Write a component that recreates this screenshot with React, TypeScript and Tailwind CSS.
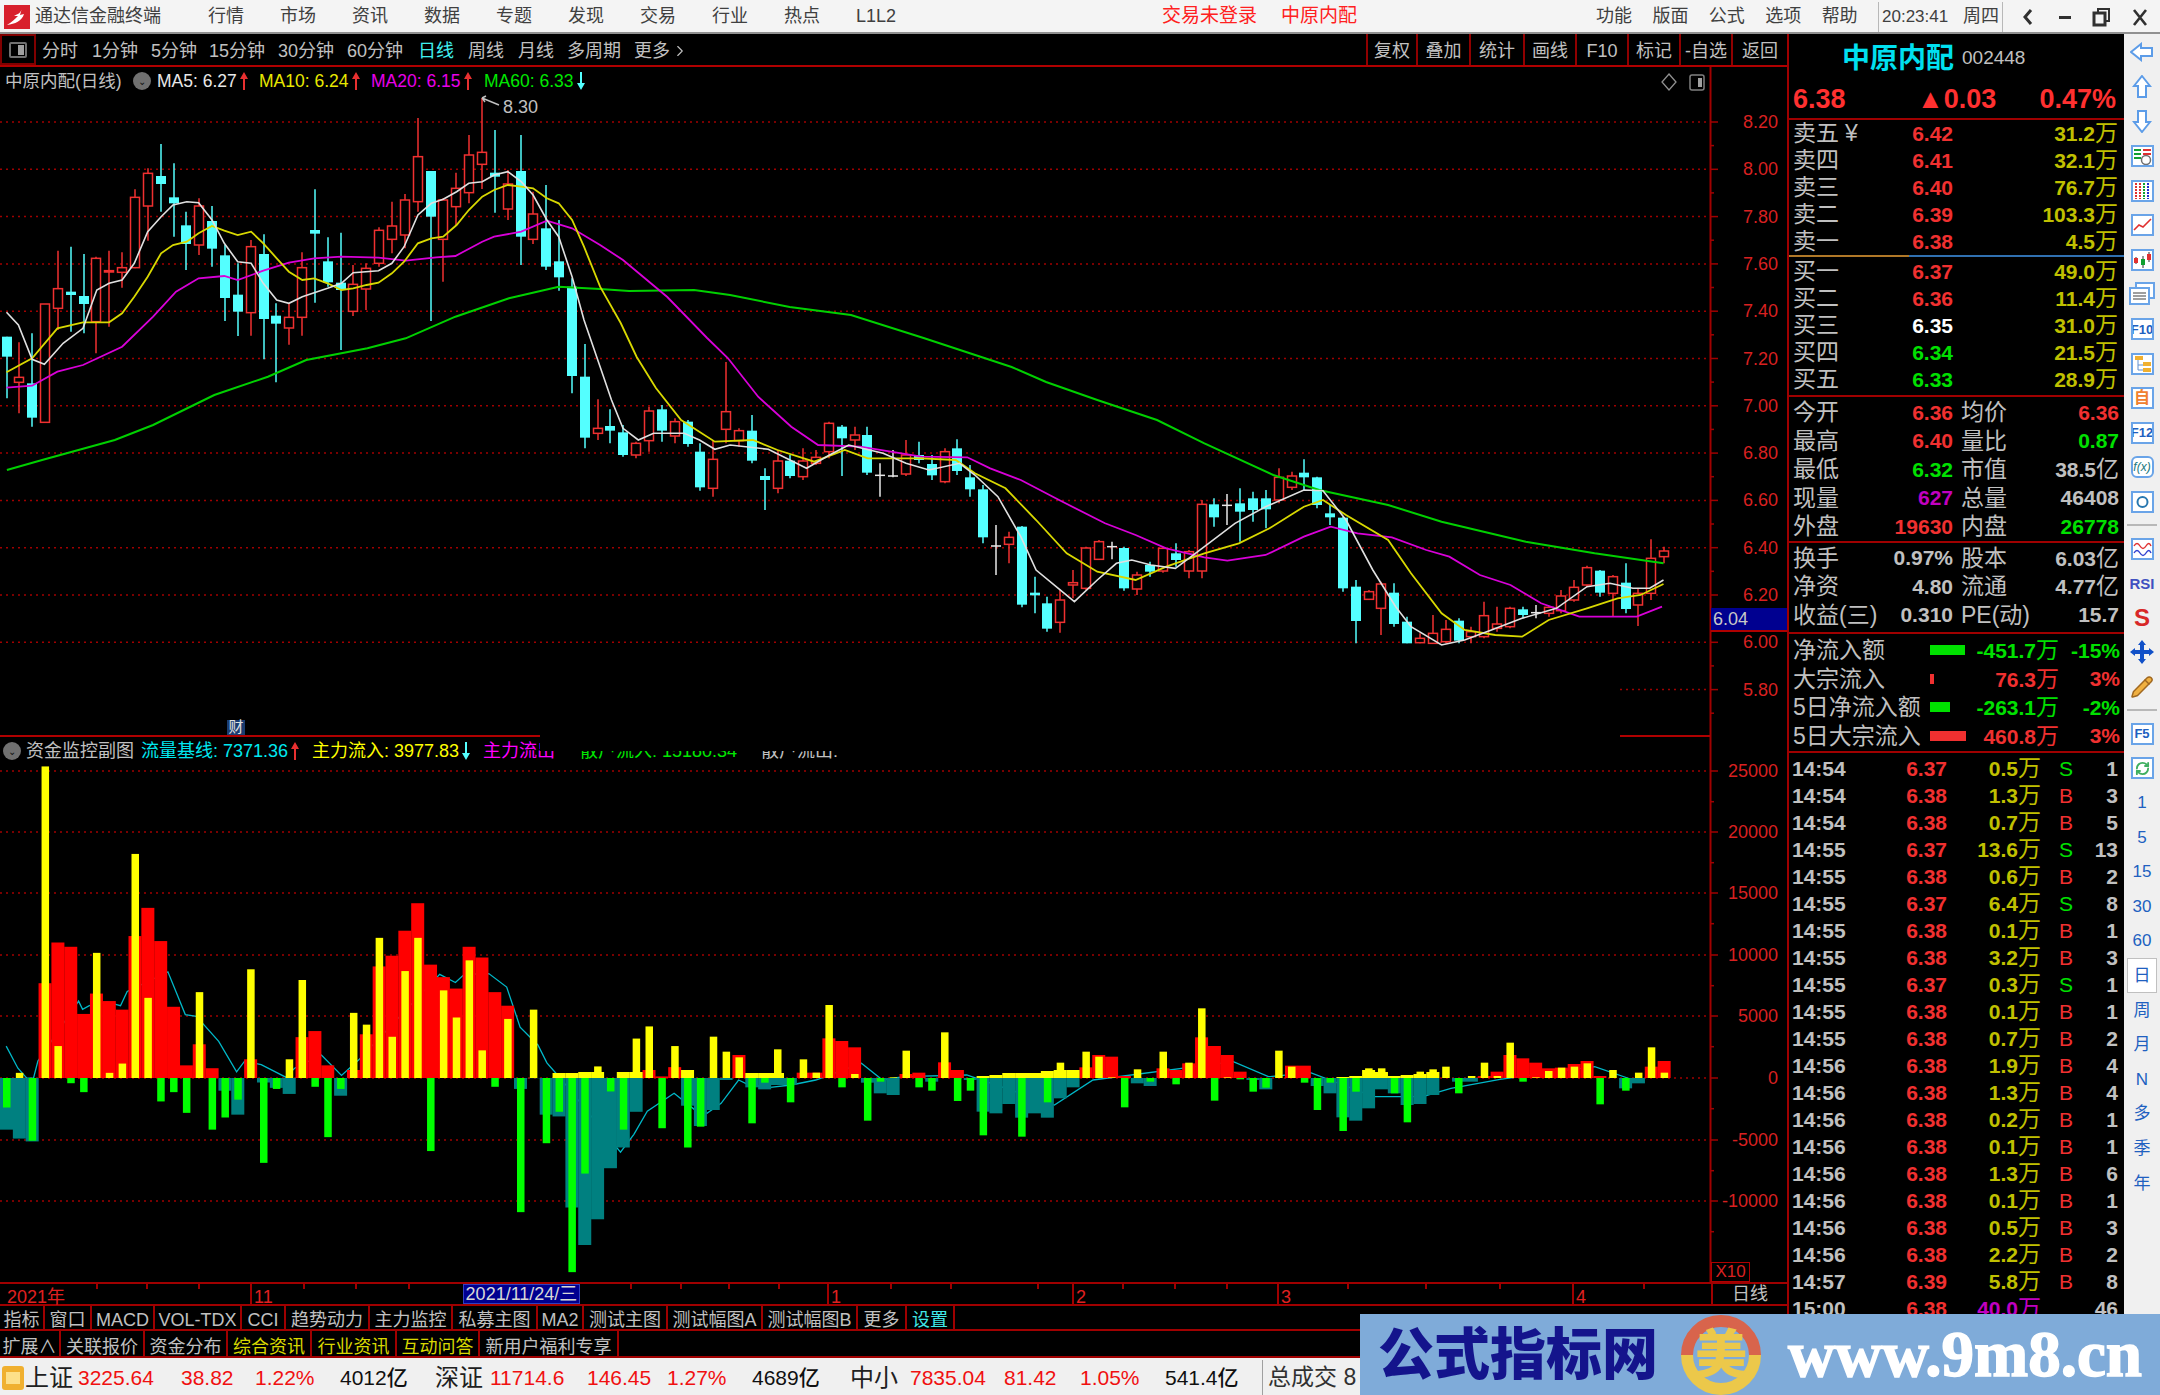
import React from "react";
import { ChevronRight, Pencil, RefreshCw } from "lucide-react";

type Kind = "r" | "c" | "w";
type Candle = [Kind, number, number, number, number];
type Pt = [number, number];

// traced off the reference: [kind, high, bodyTop, bodyBottom, low]
const headCandles: Candle[] = [
  ["c", 650, 650, 710, 835], ["r", 667, 772, 787, 880], ["c", 640, 790, 893, 920], ["r", 552, 552, 907, 907],
  ["r", 392, 506, 565, 630], ["c", 380, 515, 525, 635], ["c", 402, 528, 552, 640], ["r", 410, 415, 605, 700],
  ["r", 392, 452, 456, 620], ["r", 397, 443, 457, 503], ["r", 208, 232, 443, 445], ["r", 145, 160, 258, 362],
  ["c", 72, 168, 192, 275], ["c", 130, 232, 250, 350], ["c", 275, 316, 372, 450], ["r", 235, 258, 375, 405],
  ["c", 258, 303, 386, 440], ["c", 375, 406, 534, 603], ["c", 430, 524, 575, 648], ["r", 360, 380, 578, 647],
  ["c", 343, 402, 597, 718], ["c", 550, 587, 611, 787], ["r", 550, 592, 624, 674], ["r", 397, 443, 592, 647],
  ["c", 208, 330, 341, 548], ["c", 352, 424, 487, 500], ["c", 338, 488, 510, 690], ["r", 435, 493, 574, 588],
  ["r", 430, 445, 507, 570], ["r", 322, 331, 430, 440], ["r", 245, 318, 358, 400], ["r", 222, 240, 345, 385],
  ["r", -6, 110, 245, 275], ["c", 153, 153, 290, 603], ["r", 235, 240, 358, 485], ["r", 158, 205, 260, 315],
  ["r", 45, 105, 218, 250], ["r", -66, 97, 133, 207], ["c", 30, 158, 170, 278], ["r", 150, 192, 267, 300],
  ["c", 45, 153, 350, 435], ["r", 215, 282, 358, 372], ["c", 195, 325, 440, 450], ["c", 300, 424, 472, 512],
  ["c", 475, 500, 768, 820], ["c", 672, 770, 953, 985], ["r", 838, 925, 940, 960],
];

const tailCandles: Candle[] = [
  ["c", 28, 78, 92, 130], ["c", 75, 97, 165, 170], ["r", 125, 130, 165, 175], ["r", 20, 33, 122, 155],
  ["c", 15, 28, 92, 125], ["r", 55, 65, 108, 130], ["c", 60, 65, 132, 140], ["c", 130, 155, 262, 272],
  ["r", 120, 178, 265, 290], ["r", -114, 35, 88, 130], ["r", 85, 92, 122, 140], ["c", 45, 92, 182, 190],
  ["c", 205, 228, 240, 330], ["r", 150, 183, 265, 280], ["c", 165, 182, 228, 235], ["r", 145, 183, 230, 240],
  ["r", 150, 172, 190, 195], ["r", 65, 70, 155, 175], ["c", 75, 80, 115, 228], ["r", 80, 105, 120, 150],
  ["c", 80, 105, 218, 225], ["w", 190, 226, 230, 290], ["w", 150, 228, 232, 232], ["r", 120, 165, 222, 228],
  ["c", 125, 165, 180, 190], ["c", 165, 192, 226, 240], ["r", 145, 155, 245, 250], ["c", 118, 145, 213, 225],
  ["c", 195, 232, 268, 290], ["c", 255, 268, 412, 430], ["w", 375, 438, 442, 525], ["r", 395, 412, 433, 490],
  ["c", 378, 380, 614, 622], ["c", 530, 578, 586, 640], ["c", 590, 610, 686, 695], ["r", 570, 600, 667, 698],
  ["r", 510, 548, 555, 595], ["r", 440, 444, 565, 570], ["r", 420, 425, 478, 480], ["w", 425, 440, 444, 478],
  ["c", 440, 444, 565, 572], ["r", 515, 525, 567, 585], ["c", 485, 495, 515, 530], ["r", 440, 445, 513, 518],
  ["c", 430, 460, 480, 500], ["r", 450, 455, 513, 535], ["r", 300, 313, 513, 535], ["c", 295, 313, 352, 380],
  ["w", 282, 316, 320, 375], ["c", 265, 310, 335, 425], ["c", 275, 295, 330, 365], ["c", 270, 295, 328, 385],
  ["r", 205, 232, 300, 310], ["r", 215, 228, 262, 270], ["c", 178, 218, 232, 270], ["c", 230, 232, 315, 325],
  ["c", 315, 340, 352, 375], ["c", 350, 353, 565, 575], ["c", 540, 560, 663, 730], ["r", 570, 575, 598, 600],
  ["r", 545, 552, 625, 705], ["c", 550, 578, 672, 680], ["c", 650, 665, 730, 730], ["r", 700, 715, 728, 730],
  ["r", 645, 700, 730, 730], ["r", 660, 688, 725, 730], ["c", 655, 662, 722, 730], ["r", 680, 695, 710, 730],
  ["r", 605, 647, 710, 715], ["r", 620, 672, 685, 695], ["r", 620, 625, 680, 685], ["c", 620, 628, 645, 655],
  ["w", 615, 638, 642, 655], ["r", 618, 622, 640, 650], ["r", 570, 588, 632, 640], ["r", 540, 562, 600, 605],
  ["r", 497, 503, 555, 560], ["c", 510, 512, 578, 590], ["r", 525, 530, 580, 650], ["c", 490, 548, 627, 640],
  ["r", 565, 580, 615, 678], ["r", 418, 475, 580, 600], ["r", 440, 453, 470, 490],
].slice(0, 83) as Candle[];

const candles: Candle[] = [
  ...headCandles.map(([k, a, b, c, d]): Candle => [k, 120 + a / 3, 120 + b / 3, 120 + c / 3, 120 + d / 3]),
  ...tailCandles.map(([k, a, b, c, d]): Candle => [k, 400 + a / 3, 400 + b / 3, 400 + c / 3, 400 + d / 3]),
];

const colX = (i: number) => 6.5 + 12.85 * i;

const trace = (a: Pt[], b: Pt[]) =>
  [
    ...a.map(([x, y]) => `${(x / 2.613).toFixed(1)},${(120 + y / 3).toFixed(1)}`),
    ...b.map(([x, y]) => `${(600 + x / 1.307).toFixed(1)},${(400 + y / 3).toFixed(1)}`),
  ].join(" ");

const ma5 = trace(
  [[17, 577], [48, 615], [84, 718], [116, 733], [165, 670], [217, 625], [253, 510], [285, 490], [319, 480], [351, 430], [386, 335], [421, 290], [452, 255], [488, 245], [519, 248], [554, 300], [586, 370], [621, 425], [656, 430], [688, 490], [723, 540], [755, 550], [790, 530], [856, 505], [892, 490], [923, 458], [989, 452], [1024, 430], [1056, 380], [1092, 285], [1127, 250], [1158, 238], [1193, 215], [1225, 190], [1260, 185], [1291, 165], [1327, 155], [1362, 185], [1393, 225], [1429, 300], [1460, 350], [1495, 470], [1526, 600], [1568, 740]],
  [[15, 0], [30, 85], [50, 120], [70, 100], [110, 100], [130, 120], [150, 148], [170, 135], [220, 148], [270, 205], [300, 165], [325, 135], [370, 160], [400, 190], [430, 210], [470, 190], [490, 225], [520, 290], [550, 410], [570, 510], [620, 605], [650, 540], [675, 490], [695, 480], [720, 495], [752, 505], [790, 440], [830, 370], [870, 320], [920, 270], [945, 272], [975, 360], [1010, 510], [1040, 620], [1060, 680], [1100, 735], [1130, 720], [1165, 690], [1205, 655], [1250, 625], [1290, 560], [1320, 550], [1350, 565], [1372, 565], [1390, 540]]
);
const ma10 = trace(
  [[17, 757], [84, 715], [150, 625], [217, 607], [285, 607], [319, 580], [351, 530], [386, 470], [421, 400], [452, 375], [488, 365], [519, 340], [554, 318], [586, 332], [621, 345], [656, 335], [688, 370], [723, 415], [755, 455], [790, 480], [821, 475], [856, 490], [892, 510], [923, 505], [958, 495], [989, 488], [1024, 460], [1056, 425], [1092, 370], [1127, 355], [1158, 350], [1193, 315], [1225, 270], [1260, 230], [1291, 210], [1327, 195], [1362, 200], [1393, 205], [1429, 235], [1460, 250], [1495, 300], [1526, 380], [1568, 500]],
  [[27, -231], [48, -129], [73, -36], [106, 60], [150, 125], [200, 120], [232, 150], [280, 185], [320, 150], [350, 175], [420, 175], [465, 180], [490, 220], [530, 265], [570, 360], [610, 460], [650, 515], [700, 540], [740, 500], [790, 460], [835, 430], [875, 385], [920, 320], [945, 300], [975, 345], [1030, 420], [1060, 520], [1100, 640], [1130, 690], [1170, 705], [1205, 710], [1240, 660], [1290, 625], [1330, 595], [1360, 585], [1390, 552]]
);
const ma20 = trace(
  [[17, 803], [84, 797], [150, 755], [217, 735], [319, 680], [400, 590], [460, 515], [519, 475], [586, 468], [621, 480], [688, 452], [755, 428], [821, 415], [892, 410], [989, 413], [1060, 422], [1140, 412], [1190, 408], [1260, 365], [1291, 350], [1362, 335], [1429, 302], [1495, 325], [1568, 375]],
  [[30, -420], [88, -309], [140, -186], [167, -126], [207, -9], [250, 80], [285, 135], [340, 140], [420, 170], [480, 172], [510, 205], [550, 240], [600, 300], [660, 370], [700, 405], [740, 445], [790, 472], [820, 482], [870, 465], [920, 410], [955, 380], [990, 400], [1035, 412], [1080, 450], [1110, 470], [1150, 525], [1190, 555], [1230, 610], [1280, 650], [1320, 650], [1355, 650], [1388, 620]]
);
const ma60 = trace(
  [[18, 1050], [110, 1020], [300, 960], [400, 915], [560, 825], [700, 770], [800, 720], [960, 685], [1060, 655], [1190, 590], [1330, 535], [1460, 500], [1568, 507]],
  [[38, -327], [123, -330], [170, -315], [248, -279], [328, -255], [423, -186], [538, -99], [583, -54], [650, 0], [728, 60], [790, 130], [880, 225], [940, 270], [1030, 315], [1100, 365], [1210, 425], [1300, 460], [1390, 490]]
);

const flowLine = [
  ...([[14, 913], [40, 975], [60, 1003], [75, 1003], [85, 955], [176, 787], [185, 810], [200, 800], [240, 790], [270, 800], [285, 760], [376, 705], [415, 825], [440, 830], [490, 900], [530, 985], [548, 955], [585, 965], [640, 1000], [660, 975], [720, 938], [765, 995], [805, 950], [985, 712], [1020, 735], [1040, 712], [1095, 710], [1135, 748], [1165, 860], [1205, 910], [1225, 960], [1255, 1003], [1390, 1210], [1420, 1160], [1450, 1095], [1510, 1045], [1555, 1090]] as Pt[]).map(
    ([x, y]) => `${(x / 2.24).toFixed(1)},${(720 + y / 2.8).toFixed(1)}`
  ),
  ...([[10, 340], [30, 310], [55, 240], [70, 255], [100, 262], [130, 255], [165, 240], [230, 190], [260, 240], [290, 230], [380, 225], [505, 315], [560, 240], [760, 185], [810, 230], [870, 218], [960, 290], [1030, 290], [1070, 265], [1140, 238], [1275, 200], [1330, 240]] as Pt[]).map(
    ([x, y]) => `${(700 + x / 1.425).toFixed(1)},${(1000 + y / 3).toFixed(1)}`
  ),
].join(" ");

// sub chart, thin bars. first part read with y = 720 + v / 2.8, rest y = 1000 + v / 3
const thinA = [1085, 988, 1178, 130, 913, 1017, 1042, 652, 988, 962, 375, 778, 1068, 1042, 1100, 762, 1147, 1113, 1063, 698, 1240, 1033, 950, 728, 1027, 1168, 1033, 820, 853, 610, 887, 703, 610, 1207, 757, 833, 673, 925, 1027, 837, 1378, 811, 1185, 1097, 1546, 1270, 970, 1040, 1147, 892, 858, 1143, 913, 1197];
const thinB = [380, 110, 155, 172, 370, 248, 148, 307, 178, 218, 15, 262, 222, 362, 245, 232, 152, 262, 272, 97, 303, 272, 406, 225, 222, 410, 220, 307, 188, 210, 155, 170, 232, 322, 208, 245, 155, 253, 188, 25, 302, 232, 238, 275, 263, 152, 200, 248, 330, 248, 393, 275, 205, 205, 280, 367, 215, 208, 200, 280, 228, 188, 228, 128, 245, 232, 213, 203, 200, 190, 313, 210, 272, 218, 142, 218];
const wideA = [1147, 1172, 1180, 737, 623, 635, 823, 766, 787, 811, 605, 526, 619, 803, 967, 908, 975, 1038, 1105, 950, 1015, 1030, 1047, 888, 871, 967, 1052, 980, 880, 690, 660, 590, 513, 685, 720, 752, 635, 665, 762, 800, 1033, 1003, 1105, 1110, 1365, 1470, 1398, 1255, 1197, 1097, 980, 998, 972, 1080];
const wideB = [378, 330, 240, 165, 262, 268, 255, 255, 218, 218, 115, 123, 142, 248, 280, 285, 222, 218, 245, 187, 210, 240, 335, 340, 312, 353, 340, 353, 295, 262, 202, 165, 170, 228, 250, 258, 205, 210, 190, 112, 138, 165, 215, 240, 268, 234, 197, 197, 258, 280, 352, 362, 325, 268, 280, 315, 312, 285, 234, 245, 245, 228, 215, 165, 175, 188, 205, 203, 192, 183, 228, 234, 265, 250, 200, 183];
const caps: Record<number, number> = {
  43: 1073, 44: 1073, 45: 1072, 46: 1072, 48: 1072, 49: 1072, 53: 1070,
  58: 1073, 59: 1073, 60: 1073, 76: 1076, 77: 1075, 78: 1073, 79: 1073, 80: 1073, 81: 1071, 82: 1070, 83: 1070,
  104: 1077, 105: 1076, 106: 1070, 107: 1072, 108: 1076, 109: 1075, 110: 1074, 111: 1072,
};

const thinY = [...thinA.map((v) => 720 + v / 2.8), ...thinB.map((v) => 1000 + v / 3)];
const wideY = [...wideA.map((v) => 720 + v / 2.8), ...wideB.map((v) => 1000 + v / 3)];
const zeroY = 1078;

const priceLines = ["8.20", "8.00", "7.80", "7.60", "7.40", "7.20", "7.00", "6.80", "6.60", "6.40", "6.20", "6.00", "5.80"];
const flowLabels = [["25000", 771], ["20000", 832], ["15000", 893], ["10000", 955], ["5000", 1016], ["0", 1078], ["-5000", 1140], ["-10000", 1201]] as const;

const axisText = "fill-[#d82020] text-[18px]";

function MainChart() {
  return (
    <div className="relative h-[670px] shrink-0">
      <svg width="1787" height="670" viewBox="0 67 1787 670" className="block">
        {priceLines.map((p, i) => {
          const y = 122 + 47.3 * i;
          return (
            <g key={p}>
              <line x1={p === "5.80" ? 1620 : 0} x2="1710" y1={y} y2={y} stroke="#a00000" strokeWidth="1.5" strokeDasharray="2 4" />
              <line x1="1710" x2="1718" y1={y} y2={y} stroke="#a00000" strokeWidth="1.5" />
              <line x1="1710" x2="1714" y1={y + 23.6} y2={y + 23.6} stroke="#a00000" strokeWidth="1.5" />
              <text x="1778" y={y + 6} textAnchor="end" className={axisText}>{p}</text>
            </g>
          );
        })}
        <line x1="1710.5" x2="1710.5" y1="67" y2="737" stroke="#a00000" strokeWidth="2" />
        <line x1="1620" x2="1710" y1="736" y2="736" stroke="#b00000" strokeWidth="2" />
        <line x1="0" x2="540" y1="736" y2="736" stroke="#b00000" strokeWidth="2" />
        {candles.map(([k, hi, top, bot, lo], i) => {
          const x = Math.round(colX(i));
          if (k === "r")
            return (
              <g key={i} stroke="#f03030" strokeWidth="1.5">
                <line x1={x} x2={x} y1={hi} y2={top} />
                <line x1={x} x2={x} y1={bot} y2={lo} />
                <rect x={x - 4.5} y={top} width="9" height={Math.max(bot - top, 1)} fill="#000" />
              </g>
            );
          if (k === "w")
            return (
              <g key={i} stroke="#e8e8e8" strokeWidth="1.5">
                <line x1={x} x2={x} y1={hi} y2={lo} />
                <line x1={x - 5} x2={x + 5} y1={top} y2={top} />
              </g>
            );
          return (
            <g key={i}>
              <line x1={x} x2={x} y1={hi} y2={lo} stroke="#54ffff" strokeWidth="1.5" />
              <rect x={x - 5} y={top} width="10" height={bot - top} fill="#54ffff" />
            </g>
          );
        })}
        <polyline points={ma60} fill="none" stroke="#00d000" strokeWidth="2" />
        <polyline points={ma20} fill="none" stroke="#d800d8" strokeWidth="1.8" />
        <polyline points={ma10} fill="none" stroke="#d8d800" strokeWidth="1.8" />
        <polyline points={ma5} fill="none" stroke="#e0e0e0" strokeWidth="1.6" />
        <path d="M482 98 l17 7 M482 98 l4 -2 M482 98 l3 4" stroke="#c0c0c0" strokeWidth="1.4" fill="none" />
        <text x="503" y="113" className="fill-[#c0c0c0] text-[18px]">8.30</text>
        <path d="M1669 74 l7 8 l-7 8 l-7 -8 z" fill="none" stroke="#909090" strokeWidth="1.3" />
        <rect x="1690" y="75" width="14" height="15" rx="2" fill="none" stroke="#808080" strokeWidth="1.5" />
        <rect x="1698" y="78" width="4" height="9" fill="#a0a0a0" />
      </svg>

      {/* price flag on the axis */}
      <div className="absolute left-[1711px] top-[541px] flex h-[24px] w-[76px] items-center border-b-2 border-[#b00000] bg-[#000090] pl-[2px] text-[18px] text-[#c8c8c8]">
        6.04
      </div>

      <div className="absolute left-0 top-[4px] flex h-[20px] items-center text-[17.5px]">
        <span className="ml-[5px] w-[128px] text-[#c0c0c0]">中原内配(日线)</span>
        <span className="mr-[6px] flex h-[18px] w-[18px] items-center justify-center rounded-full bg-[#707070] text-[10px] text-[#111]">⌄</span>
        <Legend className="w-[102px] text-[#e8e8e8]" text="MA5: 6.27" up />
        <Legend className="w-[112px] text-[#e8e800]" text="MA10: 6.24" up />
        <Legend className="w-[113px] text-[#e800e8]" text="MA20: 6.15" up />
        <Legend className="w-[110px] text-[#00e800]" text="MA60: 6.33" />
      </div>

      <div className="absolute left-[227px] top-[653px] flex h-[15px] w-[18px] items-center justify-center bg-[#1a3c70] text-[15px] text-[#e0e0e0]">
        财
      </div>
    </div>
  );
}

function Legend({ className, text, up }: { className: string; text: string; up?: boolean }) {
  return (
    <span className={`flex items-center gap-[3px] ${className}`}>
      <span>{text}</span>
      <Arrow up={up} />
    </span>
  );
}

function Arrow({ up }: { up?: boolean }) {
  return up ? (
    <svg width="8" height="18" viewBox="0 0 8 18">
      <path d="M4 0 L8 7 H5 V18 H3 V7 H0 Z" fill="#e83030" />
    </svg>
  ) : (
    <svg width="8" height="18" viewBox="0 0 8 18">
      <path d="M4 18 L8 11 H5 V0 H3 V11 H0 Z" fill="#54ffff" />
    </svg>
  );
}

function SubChart() {
  return (
    <div className="relative h-[545px] shrink-0">
      <svg width="1787" height="545" viewBox="0 737 1787 545" className="block">
        {flowLabels.map(([label, y]) => (
          <g key={label}>
            <line x1="0" x2="1710" y1={y} y2={y} stroke="#a00000" strokeWidth="1.5" strokeDasharray="2 4" />
            <line x1="1710" x2="1718" y1={y} y2={y} stroke="#a00000" strokeWidth="1.5" />
            <line x1="1710" x2="1714" y1={y + 30.7} y2={y + 30.7} stroke="#a00000" strokeWidth="1.5" />
            <text x="1778" y={y + 6} textAnchor="end" className={axisText}>{label}</text>
          </g>
        ))}
        <line x1="1710.5" x2="1710.5" y1="737" y2="1282" stroke="#a00000" strokeWidth="2" />
        <polyline points={flowLine} fill="none" stroke="#00b8c8" strokeWidth="1.3" />
        {wideY.map((y, i) => (
          <rect
            key={i}
            x={colX(i) - 6.5}
            y={Math.min(y, zeroY)}
            width="13"
            height={Math.abs(y - zeroY)}
            fill={y < zeroY ? "#ff0000" : "#008080"}
          />
        ))}
        {Object.entries(caps).map(([i, y]) => (
          <rect key={i} x={colX(Number(i)) - 6.5} y={y} width="13" height={zeroY - y} fill="#ffff00" />
        ))}
        {thinY.map((y, i) => (
          <rect
            key={i}
            x={colX(i) - 3.5}
            y={Math.min(y, zeroY)}
            width="7.5"
            height={Math.abs(y - zeroY)}
            fill={y < zeroY ? "#ffff00" : "#00ff00"}
          />
        ))}
      </svg>

      <div className="absolute left-0 top-[4px] flex h-[20px] items-center whitespace-nowrap text-[18px]">
        <span className="ml-[3px] mr-[5px] flex h-[18px] w-[18px] items-center justify-center rounded-full bg-[#707070] text-[10px] text-[#111]">⌄</span>
        <span className="w-[115px] text-[#c0c0c0]">资金监控副图</span>
        <span className="flex w-[171px] items-center gap-[3px] text-[#00e8f0]">流量基线: 7371.36<Arrow up /></span>
        <span className="flex w-[171px] items-center gap-[3px] text-[#ffff00]">主力流入: 3977.83<Arrow /></span>
        <span className="w-[97px] text-[#ff00ff]">主力流出</span>
        <span className="w-[181px] text-[#00e800]">散户流入: 15180.34</span>
        <span className="text-[#c0c0c0]">散户流出:</span>
      </div>
      {/* the pasted black block that hides part of the legend */}
      <div className="absolute left-[540px] top-0 h-[14px] w-[1080px] bg-black" />

      <div className="absolute left-[1711px] top-[525px] flex h-[20px] w-[39px] items-center justify-center border border-[#b00000] text-[17px] text-[#d82020]">
        X10
      </div>
    </div>
  );
}

const minorTicks = [96, 146, 198, 303, 355, 408, 630, 680, 728, 778, 890, 950, 1037, 1122, 1174, 1226, 1347, 1425, 1499, 1643];
const majorDates = [
  { label: "11", left: "left-[250px]" },
  { label: "1", left: "left-[827px]" },
  { label: "2", left: "left-[1072px]" },
  { label: "3", left: "left-[1277px]" },
  { label: "4", left: "left-[1572px]" },
];

function DateRow() {
  return (
    <div className="relative h-[24px] shrink-0 border-y-2 border-[#a00000] text-[18px] text-[#e02020]">
      <span className="absolute left-[7px] top-0">2021年</span>
      {minorTicks.map((x) => (
        <svg key={x} width="2" height="5" className="absolute top-0" style={{ left: x }}>
          <rect width="2" height="5" fill="#a00000" />
        </svg>
      ))}
      {majorDates.map((d) => (
        <span key={d.label} className={`absolute top-0 h-[20px] border-l-2 border-[#a00000] pl-[2px] ${d.left}`}>{d.label}</span>
      ))}
      <span className="absolute left-[463px] top-0 flex h-[20px] w-[117px] items-center justify-center border border-[#3040c0] bg-[#000090] text-[#d8d8d8]">
        2021/11/24/三
      </span>
      <span className="absolute left-[1711px] top-0 flex h-[20px] w-[76px] items-center justify-center border-l-2 border-[#a00000] text-[#c0c0c0]">
        日线
      </span>
    </div>
  );
}

const tabsA = [
  { label: "指标", w: "w-[45px]" }, { label: "窗口", w: "w-[47px]" }, { label: "MACD", w: "w-[63px]" },
  { label: "VOL-TDX", w: "w-[87px]" }, { label: "CCI", w: "w-[44px]" }, { label: "趋势动力", w: "w-[84px]" },
  { label: "主力监控", w: "w-[83px]" }, { label: "私募主图", w: "w-[85px]" }, { label: "MA2", w: "w-[46px]" },
  { label: "测试主图", w: "w-[84px]" }, { label: "测试幅图A", w: "w-[95px]" }, { label: "测试幅图B", w: "w-[95px]" },
  { label: "更多", w: "w-[49px]" }, { label: "设置", w: "w-[48px]", color: "text-[#40e8e8]" },
];
const tabsB = [
  { label: "扩展∧", w: "w-[61px]" }, { label: "关联报价", w: "w-[84px]" }, { label: "资金分布", w: "w-[83px]" },
  { label: "综合资讯", w: "w-[84px]", color: "text-[#d8d800]" }, { label: "行业资讯", w: "w-[85px]", color: "text-[#d8d800]" },
  { label: "互动问答", w: "w-[83px]", color: "text-[#d8d800]" }, { label: "新用户福利专享", w: "w-[139px]" },
];

function TabRow({ tabs, className, cell }: { tabs: { label: string; w: string; color?: string }[]; className: string; cell: string }) {
  return (
    <div className={`flex shrink-0 border-b-2 border-[#a00000] text-[18px] leading-none ${className}`}>
      {tabs.map((t) => (
        <span key={t.label} className={`flex items-center justify-center whitespace-nowrap border-r-2 border-[#a00000] ${cell} ${t.w} ${t.color ?? "text-[#c0c0c0]"}`}>
          {t.label}
        </span>
      ))}
    </div>
  );
}

const periods = [
  { label: "分时", w: "w-[50px]" }, { label: "1分钟", w: "w-[59px]" }, { label: "5分钟", w: "w-[58px]" },
  { label: "15分钟", w: "w-[69px]" }, { label: "30分钟", w: "w-[69px]" }, { label: "60分钟", w: "w-[71px]" },
  { label: "日线", w: "w-[50px]", color: "text-[#40f0f0]" }, { label: "周线", w: "w-[50px]" }, { label: "月线", w: "w-[49px]" },
  { label: "多周期", w: "w-[67px]" },
];
const tools = [
  { label: "复权", w: "w-[50px]" }, { label: "叠加", w: "w-[53px]" }, { label: "统计", w: "w-[54px]" },
  { label: "画线", w: "w-[52px]" }, { label: "F10", w: "w-[52px]" }, { label: "标记", w: "w-[52px]" },
  { label: "-自选", w: "w-[52px]" }, { label: "返回", w: "w-[56px]" },
];

function Toolbar() {
  return (
    <div className="flex h-[33px] shrink-0 items-stretch border-b-2 border-[#b00000] text-[18px] text-[#c0c0c0]">
      <div className="flex w-[36px] items-center justify-center border-2 border-[#800000]">
        <span className="flex h-[16px] w-[18px] justify-end rounded-[2px] border-2 border-[#707070] p-[1px]">
          <span className="w-[6px] bg-[#a0a0a0]" />
        </span>
      </div>
      <div className="ml-[6px] flex w-[1324px] pt-[3px]">
        {periods.map((p) => (
          <span key={p.label} className={`flex items-center whitespace-nowrap ${p.w} ${p.color ?? ""}`}>{p.label}</span>
        ))}
        <span className="flex items-center gap-[1px] whitespace-nowrap">
          更多<ChevronRight size={18} strokeWidth={1.5} />
        </span>
      </div>
      {tools.map((t) => (
        <span key={t.label} className={`flex items-center justify-center border-l-2 border-[#900000] pt-[3px] ${t.w}`}>{t.label}</span>
      ))}
    </div>
  );
}

const menu = ["行情", "市场", "资讯", "数据", "专题", "发现", "交易", "行业", "热点", "L1L2"];
const rightMenu = ["功能", "版面", "公式", "选项", "帮助"];

function TitleBar() {
  return (
    <div className="flex h-[34px] shrink-0 items-center border-b-2 border-[#909090] bg-[#f4f4f4] pt-[1px] text-[18px] text-[#404040]">
      <svg width="26" height="24" viewBox="0 0 26 24" className="ml-[4px]">
        <rect width="26" height="24" fill="#d8202c" />
        <path d="M18 3 C 17 8 14 9 10 11 L 14 11 C 11 14 8 17 3 20 C 11 19 18 16 20 9 L 16 10 Z" fill="#fff" />
      </svg>
      <span className="ml-[5px] w-[173px]">通达信金融终端</span>
      <div className="flex w-[954px]">
        {menu.map((m) => (
          <span key={m} className="w-[72px]">{m}</span>
        ))}
      </div>
      <span className="w-[119px] text-[19px] text-[#ff2020]">交易未登录</span>
      <span className="w-[315px] text-[19px] text-[#ff2020]">中原内配</span>
      <div className="flex w-[282px]">
        {rightMenu.map((m) => (
          <span key={m} className="w-[57px]">{m}</span>
        ))}
      </div>
      <div className="flex h-[30px] w-[125px] items-center border-x border-[#b8b8b8] pl-[3px] text-[17px]">
        <span className="w-[81px]">20:23:41</span>
        <span className="text-[18px]">周四</span>
      </div>
      <svg width="157" height="24" viewBox="0 0 157 24">
        <path d="M28 5 L22 12 L28 19" fill="none" stroke="#303030" strokeWidth="3" />
        <rect x="56" y="11" width="12" height="3" fill="#303030" />
        <rect x="95" y="4" width="11" height="12" fill="none" stroke="#303030" strokeWidth="2" />
        <rect x="91" y="8" width="11" height="12" fill="#f4f4f4" stroke="#303030" strokeWidth="3" />
        <path d="M131 5 L143 20 M143 5 L131 20" stroke="#303030" strokeWidth="2.6" />
      </svg>
    </div>
  );
}

const sells = [
  ["卖五", "6.42", "31.2", "text-[#f03030]"], ["卖四", "6.41", "32.1", "text-[#f03030]"], ["卖三", "6.40", "76.7", "text-[#f03030]"],
  ["卖二", "6.39", "103.3", "text-[#f03030]"], ["卖一", "6.38", "4.5", "text-[#f03030]"],
];
const buys = [
  ["买一", "6.37", "49.0", "text-[#f03030]"], ["买二", "6.36", "11.4", "text-[#f03030]"], ["买三", "6.35", "31.0", "text-white"],
  ["买四", "6.34", "21.5", "text-[#00e000]"], ["买五", "6.33", "28.9", "text-[#00e000]"],
];

function QuoteRow({ row, yen }: { row: string[]; yen?: boolean }) {
  const [label, price, vol, color] = row;
  return (
    <div className="flex h-[27px] shrink-0 items-center pl-[4px] pr-[6px]">
      <span className="relative w-[90px] text-[23px] text-[#c0c0c0]">
        {label}
        {yen && <span className="absolute left-[52px] top-0">¥</span>}
      </span>
      <span className={`w-[70px] text-right text-[21px] font-bold ${color}`}>{price}</span>
      <span className="flex-1 text-right text-[21px] font-bold text-[#c0c000]">
        {vol}<span className="text-[23px] font-normal">万</span>
      </span>
    </div>
  );
}

const R = "text-[#f03030]";
const G = "text-[#00e000]";
const N = "text-[#c0c0c0]";

function StatRow({ a, av, ac = N, b, bv, bc = N, unit }: { a: string; av: string; ac?: string; b: string; bv: string; bc?: string; unit?: string }) {
  return (
    <div className="flex h-[28.5px] items-center pl-[4px] pr-[5px]">
      <span className="w-[90px] whitespace-nowrap text-[23px] text-[#c0c0c0]">{a}</span>
      <span className={`w-[70px] text-right text-[21px] font-bold ${ac}`}>{av}</span>
      <span className="ml-[8px] w-[64px] whitespace-nowrap text-[23px] text-[#c0c0c0]">{b}</span>
      <span className={`flex-1 text-right text-[21px] font-bold ${bc}`}>
        {bv}{unit && <span className="text-[23px] font-normal">{unit}</span>}
      </span>
    </div>
  );
}

function FlowRow({ label, bar, value, pct, color }: { label: string; bar: string; value: string; pct: string; color: string }) {
  return (
    <div className="flex h-[28.5px] items-center pl-[4px] pr-[4px]">
      <span className="w-[137px] whitespace-nowrap text-[23px] text-[#c0c0c0]">{label}</span>
      <span className="w-[36px]"><span className={`block h-[10px] ${bar}`} /></span>
      <span className={`w-[93px] text-right text-[21px] font-bold ${color}`}>
        {value}<span className="text-[23px] font-normal">万</span>
      </span>
      <span className={`flex-1 text-right text-[21px] font-bold ${color}`}>{pct}</span>
    </div>
  );
}

const trades: [string, string, string, string, string][] = [
  ["14:54", "6.37", "0.5", "S", "1"], ["14:54", "6.38", "1.3", "B", "3"], ["14:54", "6.38", "0.7", "B", "5"],
  ["14:55", "6.37", "13.6", "S", "13"], ["14:55", "6.38", "0.6", "B", "2"], ["14:55", "6.37", "6.4", "S", "8"],
  ["14:55", "6.38", "0.1", "B", "1"], ["14:55", "6.38", "3.2", "B", "3"], ["14:55", "6.37", "0.3", "S", "1"],
  ["14:55", "6.38", "0.1", "B", "1"], ["14:55", "6.38", "0.7", "B", "2"], ["14:56", "6.38", "1.9", "B", "4"],
  ["14:56", "6.38", "1.3", "B", "4"], ["14:56", "6.38", "0.2", "B", "1"], ["14:56", "6.38", "0.1", "B", "1"],
  ["14:56", "6.38", "1.3", "B", "6"], ["14:56", "6.38", "0.1", "B", "1"], ["14:56", "6.38", "0.5", "B", "3"],
  ["14:56", "6.38", "2.2", "B", "2"], ["14:57", "6.39", "5.8", "B", "8"], ["15:00", "6.38", "40.0", "", "46"],
];

function QuotePanel() {
  return (
    <div className="flex w-[337px] shrink-0 flex-col overflow-hidden border-l-2 border-[#a00000]">
      <div className="h-[86px] shrink-0 border-b-2 border-[#a00000]">
        <div className="flex h-[48px] items-center pl-[53px] pt-[1px]">
          <span className="w-[120px] text-[28px] font-bold text-[#00e0f0]">中原内配</span>
          <span className="text-[19px] text-[#c0c0c0]">002448</span>
        </div>
        <div className="flex h-[35px] items-center pl-[4px] pr-[8px] text-[27px] font-bold text-[#ff3030]">
          <span className="w-[124px]">6.38</span>
          <span className="w-[120px]">▲0.03</span>
          <span className="flex-1 text-right">0.47%</span>
        </div>
      </div>
      {sells.map((r, i) => (
        <QuoteRow key={r[0]} row={r} yen={i === 0} />
      ))}
      <div className="mb-[1px] flex h-[2px] shrink-0">
        <span className="w-[120px] bg-[#b07828]" />
        <span className="flex-1 bg-[#3070b0]" />
      </div>
      {buys.map((r) => (
        <QuoteRow key={r[0]} row={r} />
      ))}
      <div className="mt-[2px] shrink-0 border-y-2 border-[#a00000] pt-[1px]">
        <StatRow a="今开" av="6.36" ac={R} b="均价" bv="6.36" bc={R} />
        <StatRow a="最高" av="6.40" ac={R} b="量比" bv="0.87" bc={G} />
        <StatRow a="最低" av="6.32" ac={G} b="市值" bv="38.5" unit="亿" />
        <StatRow a="现量" av="627" ac="text-[#c000c0]" b="总量" bv="46408" />
        <StatRow a="外盘" av="19630" ac={R} b="内盘" bv="26778" bc={G} />
      </div>
      <div className="shrink-0 border-b-2 border-[#a00000] pb-[3px] pt-[1px]">
        <StatRow a="换手" av="0.97%" b="股本" bv="6.03" unit="亿" />
        <StatRow a="净资" av="4.80" b="流通" bv="4.77" unit="亿" />
        <StatRow a="收益(三)" av="0.310" b="PE(动)" bv="15.7" />
      </div>
      <div className="shrink-0 border-b-2 border-[#a00000] pb-[1px] pt-[2px]">
        <FlowRow label="净流入额" bar="w-[35px] bg-[#00e000]" value="-451.7" pct="-15%" color={G} />
        <FlowRow label="大宗流入" bar="w-[4px] bg-[#f03030]" value="76.3" pct="3%" color={R} />
        <FlowRow label="5日净流入额" bar="w-[20px] bg-[#00e000]" value="-263.1" pct="-2%" color={G} />
        <FlowRow label="5日大宗流入" bar="w-[36px] bg-[#f03030]" value="460.8" pct="3%" color={R} />
      </div>
      <div className="shrink-0 pt-[2px]">
        {trades.map(([t, p, v, f, n], i) => (
          <div key={i} className="flex h-[27px] items-center pl-[3px] pr-[6px] text-[21px] font-bold">
            <span className={`w-[65px] ${N}`}>{t}</span>
            <span className={`w-[90px] text-right ${R}`}>{p}</span>
            <span className={`w-[94px] text-right ${f ? "text-[#c0c000]" : "text-[#c000c0]"}`}>
              {v}<span className="text-[23px] font-normal">万</span>
            </span>
            <span className={`ml-[18px] w-[14px] font-normal ${f === "S" ? G : R}`}>{f}</span>
            <span className={`flex-1 text-right ${N}`}>{n}</span>
          </div>
        ))}
      </div>
    </div>
  );
}

function IconBox({ children, rounded }: { children: React.ReactNode; rounded?: boolean }) {
  return (
    <span className={`flex h-[22px] w-[23px] items-center justify-center overflow-hidden border-2 border-[#6aa4e8] bg-white ${rounded ? "rounded-[6px]" : ""}`}>
      {children}
    </span>
  );
}

const boxText = "text-[13px] font-bold leading-none text-[#2060c0]";
const sideIcons: React.ReactNode[] = [
  <svg key="l" width="24" height="20" viewBox="0 0 24 20"><path d="M1 10 L11 2 V6 H22 V14 H11 V18 Z" fill="#fff" stroke="#5c9ce8" strokeWidth="2" /></svg>,
  <svg key="u" width="20" height="24" viewBox="0 0 20 24"><path d="M10 1 L18 11 H14 V22 H6 V11 H2 Z" fill="#fff" stroke="#5c9ce8" strokeWidth="2" /></svg>,
  <svg key="d" width="20" height="24" viewBox="0 0 20 24"><path d="M10 23 L18 13 H14 V2 H6 V13 H2 Z" fill="#fff" stroke="#5c9ce8" strokeWidth="2" /></svg>,
  <IconBox key="a"><svg width="19" height="18" viewBox="0 0 19 18"><path d="M1 3 H8 M1 7 H8 M1 11 H8" stroke="#10a030" strokeWidth="2" /><path d="M10 3 H18 M10 7 H18" stroke="#e03030" strokeWidth="2" /><circle cx="13" cy="13" r="4.5" fill="#fff" stroke="#707070" strokeWidth="1.5" /></svg></IconBox>,
  <IconBox key="b"><svg width="19" height="18" viewBox="0 0 19 18"><g strokeWidth="2" strokeDasharray="2 1"><path d="M3 1 V17" stroke="#e03030" /><path d="M7 1 V17" stroke="#e03030" /><path d="M11 1 V17" stroke="#10a030" /><path d="M15 1 V17" stroke="#2030d0" /></g></svg></IconBox>,
  <IconBox key="c"><svg width="19" height="18" viewBox="0 0 19 18"><path d="M1 14 L6 9 L10 11 L18 3" fill="none" stroke="#e03030" strokeWidth="1.6" /></svg></IconBox>,
  <IconBox key="e"><svg width="19" height="18" viewBox="0 0 19 18"><path d="M3 6 V13 M10 5 V17 M16 1 V11" stroke="#303030" strokeWidth="1" /><rect x="1" y="7" width="4" height="5" fill="#e03030" /><rect x="8" y="8" width="4" height="6" fill="#10a030" /><rect x="14" y="3" width="4" height="6" fill="#e03030" /></svg></IconBox>,
  <svg key="f" width="26" height="24" viewBox="0 0 26 24"><rect x="7" y="1" width="18" height="15" fill="#fff" stroke="#6aa4e8" strokeWidth="2" /><rect x="1" y="6" width="19" height="16" fill="#fff" stroke="#6aa4e8" strokeWidth="2" /><path d="M4 11 H17 M4 14 H17 M4 17 H17" stroke="#808080" strokeWidth="1.6" /></svg>,
  <IconBox key="g"><span className={boxText}>F10</span></IconBox>,
  <IconBox key="h"><svg width="19" height="18" viewBox="0 0 19 18"><path d="M5 5 V15 H10 M5 10 H10" fill="none" stroke="#6090d0" /><rect x="2" y="1" width="8" height="4" fill="#f0b030" /><rect x="10" y="7" width="8" height="4" fill="#f0b030" /><rect x="10" y="13" width="8" height="4" fill="#f0b030" /></svg></IconBox>,
  <IconBox key="i"><span className="text-[16px] font-bold leading-none text-[#f08030]">自</span></IconBox>,
  <IconBox key="j"><span className={boxText}>F12</span></IconBox>,
  <IconBox key="k" rounded><span className="text-[12px] italic leading-none text-[#207880]">f(x)</span></IconBox>,
  <IconBox key="m"><svg width="19" height="18" viewBox="0 0 19 18"><circle cx="9.5" cy="9" r="5" fill="none" stroke="#2878b0" strokeWidth="2" /></svg></IconBox>,
  null,
  <IconBox key="n"><svg width="19" height="18" viewBox="0 0 19 18"><path d="M1 6 Q4 1 7 6 T13 6 T18 6" fill="none" stroke="#e03030" strokeWidth="1.4" /><path d="M1 13 Q4 8 7 13 T13 13 T18 13" fill="none" stroke="#3040d0" strokeWidth="1.4" /></svg></IconBox>,
  <span key="o" className="text-[15px] font-bold leading-none text-[#4050c0]">RSI</span>,
  <span key="p" className="text-[24px] font-bold leading-none text-[#d82828]">S</span>,
  <svg key="q" width="24" height="24" viewBox="0 0 24 24"><path d="M12 0 L16 5 H14 V10 H19 V8 L24 12 L19 16 V14 H14 V19 H16 L12 24 L8 19 H10 V14 H5 V16 L0 12 L5 8 V10 H10 V5 H8 Z" fill="#1050c8" /></svg>,
  <Pencil key="r" size={24} color="#a06820" fill="#f0b040" strokeWidth={1.5} />,
  null,
  <IconBox key="s"><span className={boxText}>F5</span></IconBox>,
  <IconBox key="t"><RefreshCw size={15} color="#40b060" strokeWidth={3} /></IconBox>,
];

const sideLabels = ["1", "5", "15", "30", "60", "日", "周", "月", "N", "多", "季", "年"];

function SideBar() {
  return (
    <div className="flex w-[36px] shrink-0 flex-col items-center bg-[#f0f0f0] pt-[1px]">
      {sideIcons.map((icon, i) =>
        icon ? (
          <div key={i} className="flex h-[34.6px] shrink-0 items-center justify-center">{icon}</div>
        ) : (
          <div key={i} className="flex h-[12px] w-[30px] shrink-0 items-center"><span className="h-[2px] w-full bg-[#b8b8b8]" /></div>
        )
      )}
      {sideLabels.map((s) => (
        <div
          key={s}
          className={`flex h-[34.6px] w-[30px] shrink-0 items-center justify-center text-[17px] text-[#2060c0] ${s === "日" ? "border border-[#c0c0c0] bg-white" : ""}`}
        >
          {s}
        </div>
      ))}
    </div>
  );
}

const statusItems = [
  { t: "上证", w: "w-[53px]", c: "text-[#202020] text-[24px] font-normal" },
  { t: "3225.64", w: "w-[103px]", c: "text-[#f01010]" },
  { t: "38.82", w: "w-[74px]", c: "text-[#f01010]" },
  { t: "1.22%", w: "w-[85px]", c: "text-[#f01010]" },
  { t: "4012亿", w: "w-[95px]", c: "text-[#101010]" },
  { t: "深证", w: "w-[55px]", c: "text-[#202020] text-[24px] font-normal" },
  { t: "11714.6", w: "w-[97px]", c: "text-[#f01010]" },
  { t: "146.45", w: "w-[80px]", c: "text-[#f01010]" },
  { t: "1.27%", w: "w-[85px]", c: "text-[#f01010]" },
  { t: "4689亿", w: "w-[98px]", c: "text-[#101010]" },
  { t: "中小", w: "w-[60px]", c: "text-[#202020] text-[24px] font-normal" },
  { t: "7835.04", w: "w-[94px]", c: "text-[#f01010]" },
  { t: "81.42", w: "w-[76px]", c: "text-[#f01010]" },
  { t: "1.05%", w: "w-[85px]", c: "text-[#f01010]" },
  { t: "541.4亿", w: "w-[97px]", c: "text-[#101010]" },
];

function StatusBar() {
  return (
    <div className="flex h-[37px] shrink-0 items-center whitespace-nowrap bg-[#f0f0f0] pt-[2px] text-[21px] font-medium">
      <span className="ml-[2px] mr-[1px] flex h-[24px] w-[22px] items-center justify-center rounded-[3px] bg-[#f0b030]">
        <span className="h-[12px] w-[14px] bg-[#fde08a]" />
      </span>
      {statusItems.map((s) => (
        <span key={s.t} className={`${s.w} ${s.c}`}>{s.t}</span>
      ))}
      <span className="border-l border-[#a0a0a0] pl-[5px] text-[23px] font-normal text-[#303030]">总成交 8</span>
    </div>
  );
}

function Banner() {
  return (
    <div className="absolute bottom-0 right-0 flex h-[81px] w-[800px] items-center bg-[#7fabd9] pl-[18px]">
      <span className="w-[280px] whitespace-nowrap text-[56px] font-black leading-none text-[#14148c]">公式指标网</span>
      <svg width="84" height="84" viewBox="0 0 84 84" className="ml-[21px] shrink-0">
        <path d="M8 42 A34 34 0 0 1 76 42" fill="none" stroke="#d8644c" strokeWidth="12" />
        <path d="M8 42 A34 34 0 0 0 76 42" fill="none" stroke="#ecc84a" strokeWidth="12" />
        <text x="42" y="60" textAnchor="middle" className="fill-[#ecc84a] text-[52px] font-black">美</text>
      </svg>
      <span className="ml-[25px] whitespace-nowrap [font-family:'Liberation_Serif',serif] text-[65px] font-bold leading-none text-white [-webkit-text-stroke:1.5px_white]">
        www.9m8.cn
      </span>
    </div>
  );
}

export default function App() {
  return (
    <div className="relative flex h-[1395px] w-[2160px] flex-col overflow-hidden bg-black [font-family:'Liberation_Sans','Noto_Sans_CJK_SC',sans-serif]">
      <TitleBar />
      <div className="flex h-[1324px] shrink-0">
        <div className="flex w-[1787px] shrink-0 flex-col">
          <Toolbar />
          <MainChart />
          <SubChart />
          <DateRow />
          <TabRow tabs={tabsA} className="h-[25px]" cell="pt-[5px]" />
          <TabRow tabs={tabsB} className="h-[27px]" cell="pt-[7px]" />
        </div>
        <QuotePanel />
        <SideBar />
      </div>
      <StatusBar />
      <Banner />
    </div>
  );
}
